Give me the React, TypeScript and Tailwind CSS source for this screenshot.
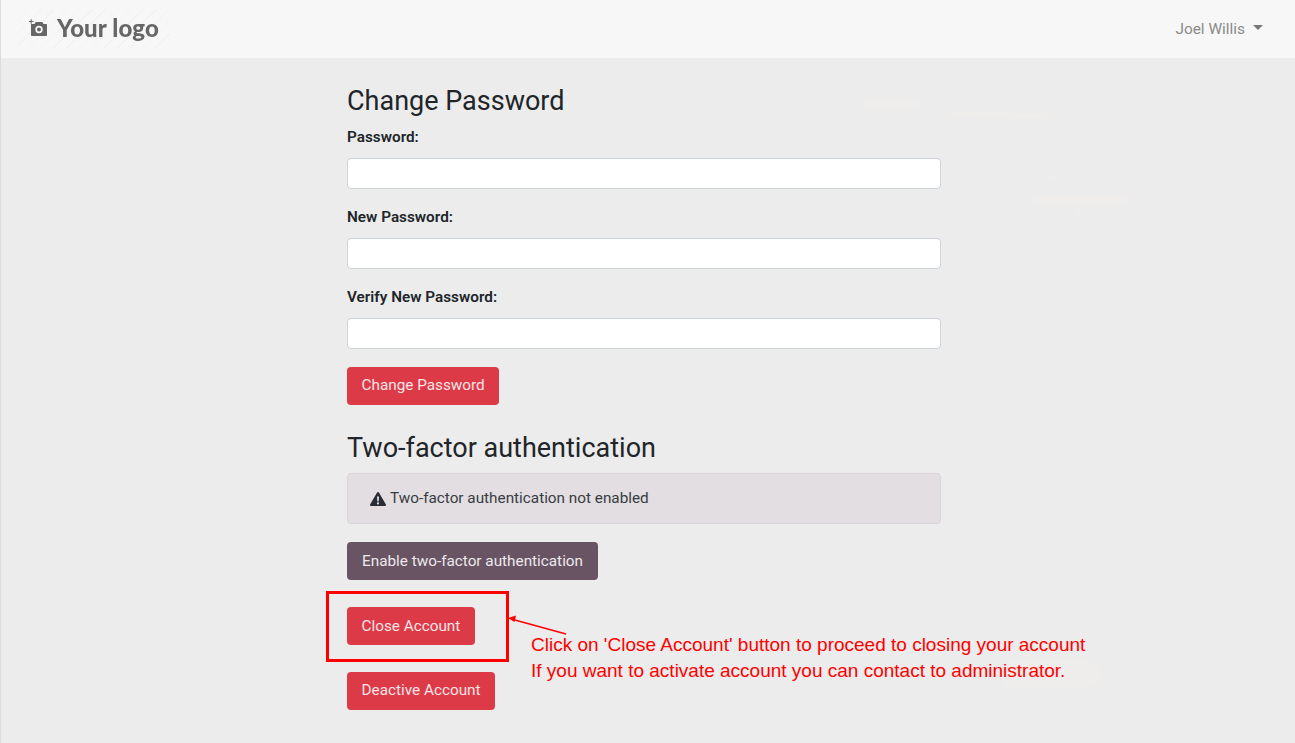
// Account settings page: change password, two-factor status and account closing.

const FIELDS = ['Password:', 'New Password:', 'Verify New Password:'];

function Smudge({ className }: { className: string }) {
  return <div className={`absolute bg-[#efecec] ${className}`} />;
}

function LogoMark() {
  return (
    <svg width="19" height="17" viewBox="0 0 19 17" className="shrink-0 mt-[-3px]">
      <path d="M0 2.500h4.500M2.200 .3v4.500" stroke="#666" strokeWidth="1" fill="none" />
      <path
        fillRule="evenodd"
        fill="#666"
        d="M2 5h3.500l1.200-2h6.600L14.500 5h2.700c.5 0 .8.400.8.800v10.400c0 .5-.3.800-.8.800H2.800c-.5 0-.8-.3-.8-.8zM10 6.800a3.700 3.700 0 1 0 0 7.400 3.700 3.700 0 0 0 0-7.400zm0 1.700a2 2 0 1 1 0 4 2 2 0 0 1 0-4z"
      />
    </svg>
  );
}

function Navbar() {
  return (
    <nav className="h-[58px] shrink-0 bg-[#f7f7f7] flex items-center justify-between pl-[16px] pr-[32px]">
      <div className="h-[40px] w-[153px] flex items-center gap-[9px] pl-[12px] bg-[repeating-linear-gradient(135deg,#f7f7f7_0px,#f7f7f7_8px,#f2f2f2_8px,#f2f2f2_9px)]">
        <LogoMark />
        <span className="font-['Lato',sans-serif] font-black text-[24px] tracking-[0.1px] leading-none mt-[-2px] text-[#666] blur-[0.3px]">Your logo</span>
      </div>
      <div className="flex items-center gap-[8px] text-[15.4px] text-[#8a8a8a] mt-[1px]">
        <span>Joel Willis</span>
        <span className="w-0 h-0 border-x-[5px] border-x-transparent border-t-[5px] border-t-[#777] mb-[3px]" />
      </div>
    </nav>
  );
}

function RedButton({ label, className = '' }: { label: string; className?: string }) {
  return (
    <button className={`block h-[38px] px-[14.5px] rounded-[4px] bg-[#dd3a48] text-[#f8e4e6] text-[15.3px] ${className}`}>
      {label}
    </button>
  );
}

function Annotation() {
  return (
    <>
      <div className="absolute left-[325px] top-[591px] w-[183px] h-[71px] border-[3px] border-[#ff0000]" />
      <svg width="70" height="30" viewBox="0 0 70 30" className="absolute left-[504px] top-[612px]">
        <path d="M8 7.500L61 22" stroke="#ff0000" strokeWidth="1.500" fill="none" />
        <path d="M3 6l8-2.500-1.500 6.500z" fill="#ff0000" />
      </svg>
      <div className="absolute left-[530px] top-[632px] font-['Liberation_Sans',sans-serif] text-[19px] leading-[26px] text-[#ff0000] whitespace-nowrap">
        <div>Click on 'Close Account' button to proceed to closing your account</div>
        <div>If you want to activate account you can contact to administrator.</div>
      </div>
    </>
  );
}

export default function App() {
  return (
    <div className="relative h-[743px] overflow-hidden flex flex-col bg-[#ececec] font-['Roboto',sans-serif] text-[#212529] border-l border-[#dcdcdc]">
      <Navbar />
      <Smudge className="left-[862px] top-[101px] w-[58px] h-[6px] rounded-[2px]" />
      <Smudge className="left-[947px] top-[112px] w-[102px] h-[6px] rotate-[2deg] rounded-[2px]" />
      <Smudge className="left-[1047px] top-[174px] w-[9px] h-[7px] rounded-[2px]" />
      <Smudge className="left-[1028px] top-[196px] w-[103px] h-[7px] rounded-[2px]" />
      <Smudge className="left-[1074px] top-[208px] w-[7px] h-[7px] rounded-full" />
      <Smudge className="left-[999px] top-[661px] w-[100px] h-[26px] rounded-full" />
      <main className="relative w-[594px] ml-[346px] pt-[26px]">
        <h3 className="text-[27px] leading-[34px] mb-[8px]">Change Password</h3>
        {FIELDS.map((label) => (
          <div key={label} className="mb-[17px]">
            <label className="block text-[15.3px] leading-[22px] font-semibold text-[#212529] mb-[10px]">{label}</label>
            <input
              type="text"
              className="block w-full h-[31px] bg-white border border-[#ced4da] rounded-[4px]"
            />
          </div>
        ))}
        <RedButton label="Change Password" className="mt-[18px] pb-[1px]" />
        <h3 className="text-[27px] leading-[34px] mt-[26px] mb-[8px]">Two-factor authentication</h3>
        <div className="h-[51px] flex items-center gap-[4px] pl-[22px] bg-[#e2dee2] border border-[#d8d4d8] rounded-[4px] text-[15.3px] text-[#383d41]">
          <svg width="16" height="14" viewBox="0 0 16 14" className="shrink-0">
            <path
              fillRule="evenodd"
              fill="#2b2b33"
              d="M8 0c.4 0 .7.2.9.5l7 12c.4.7-.1 1.500-.9 1.500H1c-.8 0-1.300-.8-.9-1.500l7-12C7.300.2 7.600 0 8 0zM7 4.500l.3 5h1.400l.3-5zM8 10.300a1.100 1.100 0 1 0 0 2.200 1.100 1.100 0 0 0 0-2.200z"
            />
          </svg>
          <span>Two-factor authentication not enabled</span>
        </div>
        <button className="block mt-[18px] h-[38px] px-[15px] rounded-[4px] bg-[#685463] text-[#eee8ec] text-[15.3px]">
          Enable two-factor authentication
        </button>
        <RedButton label="Close Account" className="mt-[27px]" />
        <RedButton label="Deactive Account" className="mt-[27px] pb-[1px]" />
      </main>
      <Annotation />
    </div>
  );
}
